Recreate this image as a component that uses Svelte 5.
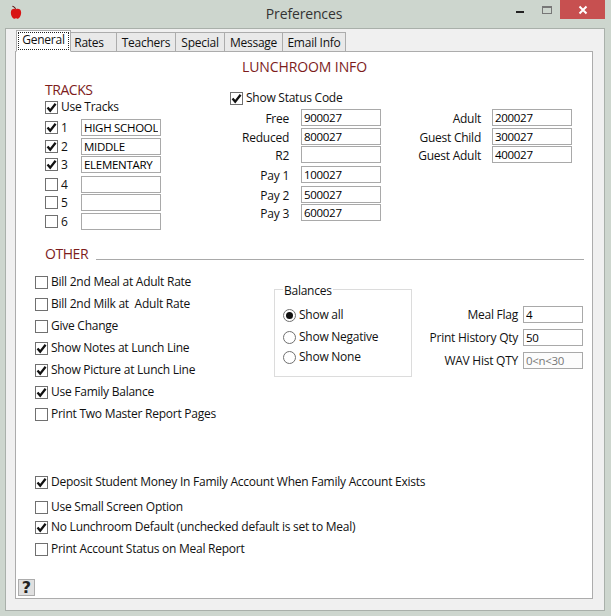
<script>
  const tabs = [
    { name: 'General', w: 55 }, { name: 'Rates', w: 46 }, { name: 'Teachers', w: 59 },
    { name: 'Special', w: 49 }, { name: 'Message', w: 58 }, { name: 'Email Info', w: 63 }
  ];
  const tracks = [
    { n: 1, on: true, v: 'HIGH SCHOOL' }, { n: 2, on: true, v: 'MIDDLE' }, { n: 3, on: true, v: 'ELEMENTARY' },
    { n: 4, on: false, v: '' }, { n: 5, on: false, v: '' }, { n: 6, on: false, v: '' }
  ];
  const codes = [['Free', '900027'], ['Reduced', '800027'], ['R2', ''], ['Pay 1', '100027'], ['Pay 2', '500027'], ['Pay 3', '600027']];
  const guests = [['Adult', '200027'], ['Guest Child', '300027'], ['Guest Adult', '400027']];
  const options = [
    ['Bill 2nd Meal at Adult Rate', false], ['Bill 2nd Milk at  Adult Rate', false], ['Give Change', false],
    ['Show Notes at Lunch Line', true], ['Show Picture at Lunch Line', true], ['Use Family Balance', true],
    ['Print Two Master Report Pages', false]
  ];
  const bottom = [
    ['Deposit Student Money In Family Account When Family Account Exists', true],
    ['Use Small Screen Option', false],
    ['No Lunchroom Default (unchecked default is set to Meal)', true],
    ['Print Account Status on Meal Report', false]
  ];
</script>

{#snippet box(on)}
  <span class="box">
    {#if on}
      <svg viewBox="0 0 11 11" width="11" height="11"><path d="M1.5 5.5 L4.2 8.6 L9.6 1.8" fill="none" stroke="#111" stroke-width="2.3"/></svg>
    {/if}
  </span>
{/snippet}

{#snippet radio(on, label)}
  <div class="radio"><span class="dot" class:on></span>{label}</div>
{/snippet}

<div class="window">
  <header class="titlebar">
    <svg class="apple" viewBox="0 0 14 16" width="12" height="15">
      <path d="M6 4 C5.5 2.5 4 1.5 2.5 1 L3 0 C5 .6 6.5 2 7 3.6 Z" fill="#5a1010"/>
      <path d="M7 4.2 C9 3 13 3.6 13 8 C13 12 10.5 15.5 8.5 15.3 C7.6 15.2 7.4 14.8 7 14.8 C6.6 14.8 6.4 15.2 5.5 15.3 C3.5 15.5 1 12 1 8 C1 3.6 5 3 7 4.2 Z" fill="#d81414"/>
    </svg>
    <span class="title">Preferences</span>
    <div class="controls">
      <span class="min"></span>
      <span class="max"></span>
      <span class="close">
        <svg viewBox="0 0 10 10" width="10" height="10"><path d="M1.5 1.5 L8.5 8.5 M8.5 1.5 L1.5 8.5" stroke="#fff" stroke-width="2" fill="none"/></svg>
      </span>
    </div>
  </header>

  <div class="client">
    <div class="tabs">
      {#each tabs as t, i}
        <div class="tab" class:active={i === 0} style="width:{t.w}px"><span>{t.name}</span></div>
      {/each}
    </div>

    <main class="panel">
      <h1>LUNCHROOM INFO</h1>

      <section class="top">
        <div class="tracks">
          <h2>TRACKS</h2>
          <label class="check use">{@render box(true)}Use Tracks</label>
          <div class="track-rows">
            {#each tracks as t}
              <div class="track">
                {@render box(t.on)}<span class="num">{t.n}</span>
                <input class="field" value={t.v} />
              </div>
            {/each}
          </div>
        </div>

        <div class="codes">
          <label class="check status">{@render box(true)}Show Status Code</label>
          <div class="code-cols">
            <div class="code-rows">
              {#each codes as [l, v]}
                <div class="code"><span>{l}</span><input class="field" value={v} /></div>
              {/each}
            </div>
            <div class="code-rows guests">
              {#each guests as [l, v]}
                <div class="code"><span>{l}</span><input class="field" value={v} /></div>
              {/each}
            </div>
          </div>
        </div>
      </section>

      <div class="other-head"><h2>OTHER</h2><span class="rule"></span></div>

      <section class="other">
        <div class="opts">
          {#each options as [l, on]}
            <label class="check">{@render box(on)}{l}</label>
          {/each}
        </div>

        <fieldset class="balances">
          <legend>Balances</legend>
          {@render radio(true, 'Show all')}
          {@render radio(false, 'Show Negative')}
          {@render radio(false, 'Show None')}
        </fieldset>

        <div class="flags">
          <div class="flag"><span>Meal Flag</span><input class="field" value="4" /></div>
          <div class="flag"><span>Print History Qty</span><input class="field" value="50" /></div>
          <div class="flag"><span>WAV Hist QTY</span><input class="field hint" value="0&lt;n&lt;30" /></div>
        </div>
      </section>

      <section class="bottom">
        {#each bottom as [l, on]}
          <label class="check">{@render box(on)}{l}</label>
        {/each}
      </section>

      <button class="help">?</button>
    </main>
  </div>
</div>

<style>
  :global(body) { margin: 0; background: #cdd6ce; }
  .window {
    width: 611px; height: 616px; box-sizing: border-box; overflow: hidden;
    background: #cdd6ce; color: #111;
    font: 12px/16px "Open Sans", "Noto Sans", sans-serif;
    letter-spacing: -0.25px;
    padding: 0 6px 5px 5px;
    display: flex; flex-direction: column;
  }
  .titlebar { height: 28px; flex: none; display: flex; align-items: flex-start; position: relative; margin: 0 -6px 0 -5px; }
  .apple { margin: 5px 0 0 10px; }
  .title {
    position: absolute; left: 0; right: 3px; top: 4px; text-align: center;
    font-size: 14px; line-height: 20px; color: #333; letter-spacing: -0.15px;
  }
  .controls { margin-left: auto; display: flex; align-items: flex-start; position: relative; margin-right: 6px; }
  .min { width: 8px; height: 2px; background: #222; margin: 11px 18px 0 0; }
  .max { width: 8px; height: 5px; border: 1px solid #777; border-top-width: 2px; margin: 6px 8px 0 0; }
  .close { width: 45px; height: 19px; background: #c75050; display: flex; align-items: center; justify-content: center; }

  .client {
    flex: 1; min-height: 0; border: 1px solid #a9b0aa; background: #f0f0f0;
    padding: 1px 11px 11px 9px; display: flex; flex-direction: column;
  }
  .tabs { display: flex; align-items: flex-end; height: 22px; flex: none; margin-bottom: -1px; padding-left: 1px; position: relative; z-index: 1; }
  .tab {
    box-sizing: border-box; height: 20px; background: #e9e9e9; border: 1px solid #acacac;
    border-left-width: 0; text-align: center; line-height: 18px; padding-top: 1px;
  }
  .tab:nth-child(2) { padding-right: 9px; }
  .tab.active {
    height: 22px; background: #fff; border-left-width: 1px; border-bottom-color: #fff;
    padding: 1px; line-height: 16px;
  }
  .tab.active span { display: block; border: 1px dotted #222; height: 16px; line-height: 14px; }

  .panel {
    flex: 1; min-height: 0; background: #fff; border: 1px solid #acacac;
    display: flex; flex-direction: column; padding-top: 7px;
  }
  h1, h2 { margin: 0; font-weight: 400; color: #7d1c1c; font-size: 14px; line-height: 16px; letter-spacing: -0.1px; }
  h1 { text-align: center; padding-left: 1px; }
  h2 { letter-spacing: -0.45px; }

  .check { display: flex; align-items: center; gap: 3px; height: 16px; white-space: pre; }
  .use { margin-top: 1px; }
  .box {
    width: 13px; height: 13px; box-sizing: border-box; border: 1px solid #707070; background: #fff;
    flex: none; display: flex; align-items: center; justify-content: center;
  }
  .field {
    box-sizing: border-box; height: 17px; width: 80px; padding: 0 2px; margin: 0; border: 1px solid #a9a9a9;
    background: #fff; color: #000; font: inherit; font-size: 11.5px; letter-spacing: -0.3px; line-height: 15px; outline: none; border-radius: 0;
  }
  .hint { color: #777; background: #fcfcfc; }

  .top { display: flex; margin-top: 7px; padding-left: 29px; }
  .tracks { width: 185px; }
  .track-rows { display: grid; grid-template-rows: 19px 18px 20px 18px 19px 16px; margin-top: 4px; }
  .track { display: flex; align-items: center; height: 17px; }
  .num { margin-left: 3px; width: 20px; }

  .codes { padding-top: 8px; }
  .status { height: 16px; }
  .code-cols { display: flex; margin-top: 3px; }
  .code-rows { display: grid; grid-template-rows: 19px 18px 20px 20px 18px 17px; align-content: start; width: 151px; }
  .code { display: flex; align-items: center; justify-content: flex-end; height: 17px; gap: 12px; }
  .code span { padding-top: 2px; }
  .guests { width: 191px; }
  .guests .code { gap: 11px; }

  .other-head { display: flex; margin-top: 17px; padding-left: 29px; align-items: flex-start; }
  .rule { flex: 1; height: 1px; background: #a9a9a9; margin: 13px 8px 0 8px; }

  .other { display: flex; align-items: flex-start; margin-top: 12px; padding-left: 19px; }
  .opts { display: grid; grid-auto-rows: 22px; width: 239px; }
  .balances {
    box-sizing: border-box; width: 138px; height: 97px; margin: 6px 0 0 0; padding: 9px 0 0 8px;
    border: 1px solid #dcdcdc; min-inline-size: 0;
  }
  legend { padding: 4px 1px 0; margin-left: 0; line-height: 14px; }
  .radio { display: flex; align-items: center; gap: 3px; height: 16px; margin-bottom: 4px; }
  .radio:first-of-type { margin-bottom: 6px; }
  .dot {
    width: 13px; height: 13px; box-sizing: border-box; border: 1px solid #707070; border-radius: 50%;
    background: #fff; display: flex; align-items: center; justify-content: center;
  }
  .dot.on::after { content: ""; width: 7px; height: 7px; border-radius: 50%; background: #111; }
  .flags { display: grid; grid-auto-rows: 23px; margin: 32px 0 0 0; width: 171px; }
  .flag { display: flex; align-items: center; justify-content: flex-end; height: 17px; gap: 5px; }
  .flag .field { width: 60px; }

  .bottom { display: grid; grid-template-rows: 25px 20px 22px 16px; margin-top: 46px; padding-left: 19px; }

  .help {
    margin: auto 0 2px 2px; width: 17px; height: 17px; box-sizing: border-box; padding: 0;
    background: #e0e0e0; border: 1px solid #acacac; border-radius: 0;
    font: 700 16px/15px "DejaVu Sans", sans-serif; color: #222;
  }
</style>
